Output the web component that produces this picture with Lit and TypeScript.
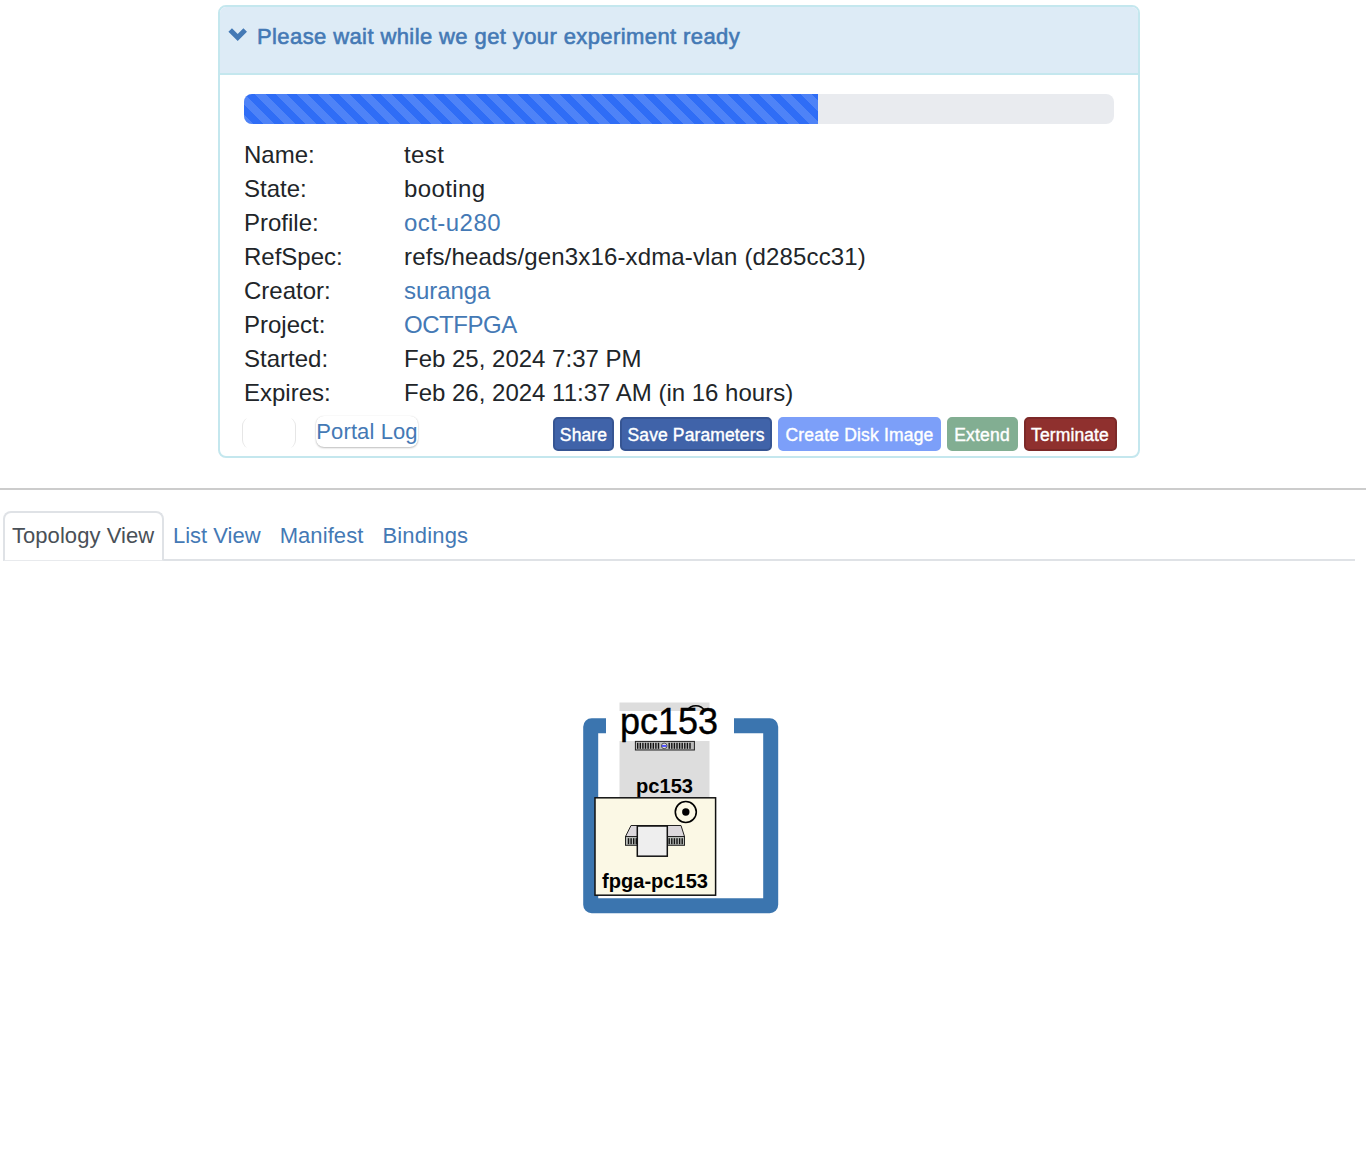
import { LitElement, html, css, svg } from "lit";
import { customElement, property } from "lit/decorators.js";
import { classMap } from "lit/directives/class-map.js";

const rows = [
  { label: "Name:", value: "test", link: false, tracking: 0.4 },
  { label: "State:", value: "booting", link: false, tracking: 0.4 },
  { label: "Profile:", value: "oct-u280", link: true, tracking: 0.45 },
  { label: "RefSpec:", value: "refs/heads/gen3x16-xdma-vlan (d285cc31)", link: false, tracking: 0.145 },
  { label: "Creator:", value: "suranga", link: true, tracking: -0.05 },
  { label: "Project:", value: "OCTFPGA", link: true, tracking: -0.45 },
  { label: "Started:", value: "Feb 25, 2024 7:37 PM", link: false, tracking: 0 },
  { label: "Expires:", value: "Feb 26, 2024 11:37 AM (in 16 hours)", link: false, tracking: 0 },
];

const actions = [
  { text: "Share", kind: "share" },
  { text: "Save Parameters", kind: "save" },
  { text: "Create Disk Image", kind: "disk" },
  { text: "Extend", kind: "extend" },
  { text: "Terminate", kind: "terminate" },
];

const tabs = ["Topology View", "List View", "Manifest", "Bindings"];

@customElement("status-panel")
class StatusPanel extends LitElement {
  @property({ type: Number }) progress = 66;

  static styles = css`
    :host { display: block; width: 922px; box-sizing: border-box; }
    .panel {
      box-sizing: border-box; height: 453px; border: 2px solid #c4e7ee;
      border-radius: 8px; background: #fff; overflow: hidden;
    }
    .head {
      box-sizing: border-box; height: 68px; display: flex; gap: 10px;
      padding: 15px 0 0 8px; background: #ddebf6; border-bottom: 2px solid #c4e7ee;
    }
    .chev { width: 19px; height: 14px; margin-top: 5px; flex: none; overflow: visible; }
    .title {
      font-size: 22px; line-height: 30px; color: #4479b5; white-space: nowrap;
      -webkit-text-stroke: 0.6px #4479b5; letter-spacing: 0.4px;
    }
    .body { padding: 19px 24px 0; }
    .track { height: 30px; border-radius: 8px; background: #e9ebef; overflow: hidden; }
    .fill {
      height: 100%; background-color: #2f6df6;
      background-image: repeating-linear-gradient(45deg,
        rgba(255,255,255,.15) 0, rgba(255,255,255,.15) 6.72px,
        transparent 6.72px, transparent 14.14px,
        rgba(255,255,255,.15) 14.14px, rgba(255,255,255,.15) 14.84px);
    }
    .rows { padding-top: 14px; }
    .row { display: flex; height: 34px; line-height: 34px; font-size: 24px; color: #212529; }
    .label { width: 160px; flex: none; }
    .value { white-space: nowrap; }
    .link { color: #4479b5; }
    .foot { display: flex; padding: 6px 21px 0 22px; }
    .ghost {
      box-sizing: border-box; width: 54px; height: 32px; margin-top: 1px; margin-right: 20px;
      border-radius: 9px; box-shadow: inset 0 0 0 1.5px #ececec;
      clip-path: inset(1.5px 0);
      background: #fff; border: 0;
      border-left: 1px solid #e6e6e6; border-right: 1px solid #e6e6e6;
      box-shadow: none;
    }
    .log {
      box-sizing: border-box; width: 102px; height: 31px; border-radius: 8px;
      box-shadow: 0 1px 2px rgba(0,0,0,.25), 0 0 1px rgba(0,0,0,.12);
      font-size: 22px; line-height: 31px; color: #4479b5; white-space: nowrap;
      text-align: center; letter-spacing: 0.1px;
    }
    .actions { display: flex; gap: 6px; margin-left: auto; margin-top: 1px; }
    .btn {
      box-sizing: border-box; height: 34px; border: 2px solid; border-radius: 5px;
      display: flex; align-items: center; justify-content: center; padding-top: 2px;
      font-size: 17.5px; color: #fff; white-space: nowrap; -webkit-text-stroke: 0.4px #fff;
      letter-spacing: 0.12px;
    }
    .share, .save { background: #4063a9; border-color: #365593; }
    .share { width: 61px; }
    .save { width: 152px; }
    .disk { width: 163px; background: #7c9ff9; border-color: #7c9ff9; letter-spacing: 0.18px; }
    .extend { width: 71px; background: #82ae92; border-color: #82ae92; letter-spacing: 0.2px; padding-right: 1px; }
    .terminate { width: 93px; background: #8f302e; border-color: #7c2928; padding-right: 1px; }
  `;

  render() {
    return html`
      <div class="panel">
        <div class="head">
          <svg class="chev" viewBox="0 0 19 14"><path d="M2.2 3 9.7 10.5 17.2 3" fill="none" stroke="#4479b5" stroke-width="5"/></svg>
          <div class="title">Please wait while we get your experiment ready</div>
        </div>
        <div class="body">
          <div class="track"><div class="fill" style="width:${this.progress}%"></div></div>
          <div class="rows">
            ${rows.map((r) => html`<div class="row">
              <span class="label">${r.label}</span>
              <span class=${classMap({ value: true, link: r.link })} style="letter-spacing:${r.tracking}px">${r.value}</span>
            </div>`)}
          </div>
        </div>
        <div class="foot">
          <div class="ghost"></div>
          <div class="log">Portal Log</div>
          <div class="actions">
            ${actions.map((a) => html`<div class="btn ${a.kind}">${a.text}</div>`)}
          </div>
        </div>
      </div>`;
  }
}

@customElement("view-tabs")
class ViewTabs extends LitElement {
  static styles = css`
    :host { display: block; }
    .tabs {
      box-sizing: border-box; display: flex; height: 50px; margin: 0 11px 0 3px;
      border-bottom: 2px solid #dfe2e6; font-size: 22px; line-height: 49px; color: #4479b5;
    }
    .tab { box-sizing: border-box; height: 50px; white-space: nowrap; padding-left: 9px; }
    .tab + .tab { padding-right: 10px; }
    .tab:nth-child(3) { letter-spacing: 0.08px; }
    .tab:nth-child(4) { letter-spacing: 0.18px; }
    .active {
      width: 161px; padding: 0 0 0 7px; color: #495057; background: #fff; line-height: 45px;
      border: 2px solid #dfe2e6; border-bottom: 1px solid #e8eaed; border-radius: 8px 8px 0 0;
      letter-spacing: 0.05px;
    }
  `;
  render() {
    return html`<div class="tabs">
      ${tabs.map((t, i) => html`<div class=${classMap({ tab: true, active: i === 0 })}>${t}</div>`)}
    </div>`;
  }
}

@customElement("topology-view")
class TopologyView extends LitElement {
  static styles = css`
    :host { display: block; }
    .canvas { display: block; width: 1366px; height: 613px; }
    .site { font-size: 36px; stroke: #000; stroke-width: 0.4px; }
    .node { font-size: 20px; font-weight: bold; }
  `;
  render() {
    const bars = (x0: number, n: number, step: number, y: number, h: number) =>
      Array.from({ length: n }, (_, i) =>
        svg`<rect x=${x0 + i * step} y=${y} width="1.4" height=${h} fill="#111"/>`);
    return html`<svg class="canvas" viewBox="0 561 1366 613">
      <rect x="590.7" y="725.7" width="180" height="180" rx="1" fill="none" stroke="#3b75af" stroke-width="15" stroke-linejoin="round"/>
      <rect x="606" y="711" width="128" height="30" fill="#fff"/>
      <rect x="619.5" y="702.5" width="90" height="8.5" fill="#ddd"/>
      <rect x="619.5" y="741" width="90" height="57" fill="#ddd"/>
      <path d="M686.9 710.7 A10.5 10.5 0 0 1 704.7 710.7" fill="none" stroke="#000" stroke-width="1.6"/>
      <text class="site" x="620" y="734" textLength="98" lengthAdjust="spacingAndGlyphs">pc153</text>
      <rect x="635.4" y="741.4" width="59" height="8.6" fill="#bbb" stroke="#222" stroke-width="1"/>
      ${bars(637, 9, 2.6, 742.8, 6)}
      ${bars(668.5, 9, 2.6, 742.8, 6)}
      <circle cx="664.2" cy="745.9" r="2.8" fill="#ddd" stroke="#333" stroke-width=".8"/>
      <rect x="661.8" y="745.1" width="4.8" height="1.7" fill="#4040ff"/>
      <text class="node" x="636" y="793" textLength="57" lengthAdjust="spacingAndGlyphs">pc153</text>
      <rect x="595" y="797.8" width="120.6" height="97.4" fill="#fbf8e5" stroke="#111" stroke-width="1.5"/>
      <circle cx="685.8" cy="812" r="10.5" fill="none" stroke="#000" stroke-width="1.6"/>
      <circle cx="685.8" cy="812" r="3.7" fill="#000"/>
      <path d="M631 825.5H681L684.5 836.5H625.5Z" fill="#dcd8dc" stroke="#222"/>
      <rect x="625.5" y="836.5" width="59" height="8.8" fill="#b8bcb8" stroke="#222"/>
      ${bars(627.8, 4, 2.6, 838.2, 6)}
      ${bars(668.5, 6, 2.6, 838.2, 6)}
      <rect x="637.3" y="826" width="30" height="30.2" fill="#eee" stroke="#111" stroke-width="1.5"/>
      <text class="node" x="602" y="888" textLength="106" lengthAdjust="spacingAndGlyphs">fpga-pc153</text>
    </svg>`;
  }
}

@customElement("app-root")
class AppRoot extends LitElement {
  static styles = css`
    :host {
      display: block; height: 1174px; overflow: hidden; background: #fff;
      font-family: "Liberation Sans", Arial, sans-serif;
    }
    .page { display: flex; flex-direction: column; padding-top: 5px; }
    .top { padding-left: 218px; padding-bottom: 30px; border-bottom: 2px solid #ccc; margin-bottom: 21px; }
  `;
  render() {
    return html`<div class="page">
      <div class="top"><status-panel .progress=${66}></status-panel></div>
      <view-tabs></view-tabs>
      <topology-view></topology-view>
    </div>`;
  }
}
